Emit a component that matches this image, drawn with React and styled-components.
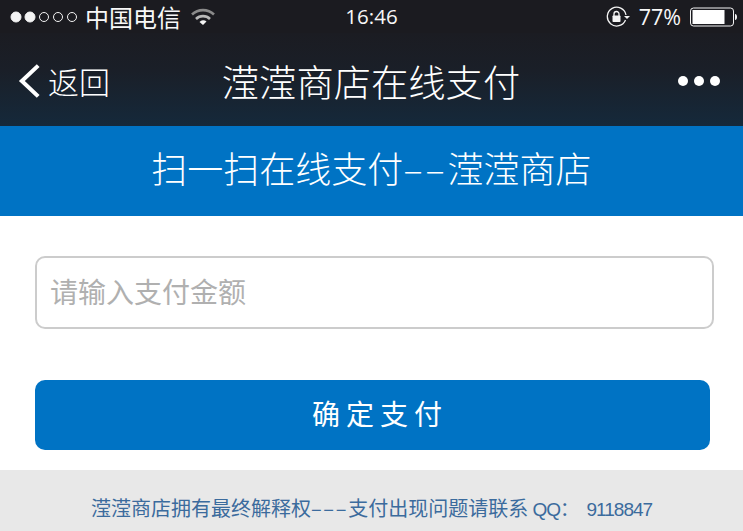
import React from "react";
import styled, { createGlobalStyle } from "styled-components";

const Global = createGlobalStyle`
  html, body { margin: 0; padding: 0; background: #fff; }
  body { font-family: "Noto Sans CJK SC", "Noto Sans", sans-serif; font-weight: 300; }
  * { box-sizing: border-box; }
`;
const Page = styled.div`
  width: 743px; height: 531px; overflow: hidden; display: flex; flex-direction: column;
`;
const StatusBar = styled.div`
  height: 33px; background: #1b1b20; color: #f8f8f8; display: grid;
  grid-template-columns: 1fr auto 1fr; align-items: center; padding: 0 6px 0 10px;
`;
const StatusLeft = styled.div`display: flex; align-items: center;`;
const StatusRight = styled.div`display: flex; align-items: center; justify-content: flex-end;`;
const Carrier = styled.span`font-size: 24px; line-height: 33px; margin-left: 6px; font-weight: 400;`;
const Clock = styled.span`font-family: "Open Sans", sans-serif; font-weight: 400; font-size: 20.5px; line-height: 33px; margin-left: -4px; `;
const Percent = styled.span`font-family: "Open Sans", sans-serif; font-weight: 400; font-size: 21.5px; line-height: 33px; margin: 0 9px 0 9px;`;
const Wifi = styled.svg`margin-left: 9px;`;
const NavBar = styled.div`
  height: 93px; padding: 2px 23px 0 18px; display: grid; grid-template-columns: 1fr auto 1fr; align-items: center;
  background: linear-gradient(#1b1c22 0%, #1a1f28 40%, #15293b 100%); color: #fff;
`;
const Back = styled.div`display: flex; align-items: center; gap: 5px; font-size: 31px;`;
const NavTitle = styled.div`font-size: 37.3px; line-height: 50px; white-space: nowrap; margin-left: 4px;`;
const More = styled.div`display: flex; justify-content: flex-end; gap: 6px;`;
const Dot = styled.i`width: 10px; height: 10px; border-radius: 50%; background: #fff; display: block;`;
const Banner = styled.div`
  height: 90px; background: #0073c4; color: #fff; font-size: 36px; display: flex; align-items: center; justify-content: center; white-space: nowrap; padding-bottom: 9px;
`;
const BannerDash = styled.span`letter-spacing: 3px;`;
const Form = styled.div`flex: 1; padding: 40px 33px 20px 35px; display: flex; flex-direction: column; align-items: flex-start;`;
const Field = styled.div`
  width: 679px; height: 73px; border: 2px solid #ccc; border-radius: 10px; padding: 0 13px 4px; display: flex; align-items: center;
  color: #b0b0b0; font-size: 28px; font-weight: 400;
`;
const Pay = styled.div`
  margin-top: 51px; width: 675px; height: 70px; border-radius: 10px; background: #0073c4; color: #fff;
  display: flex; align-items: center; justify-content: center; font-size: 28px; letter-spacing: 6px; font-weight: 400; padding: 0 0 5px 15px;
`;
const Footer = styled.div`
  height: 61px; background: #e8e8e8; color: #3b6b9d; font-size: 20px; font-weight: 400; display: flex; align-items: center; justify-content: center; padding-top: 13px; white-space: pre; 
`;
const FooterDash = styled.span`letter-spacing: 1.7px;`;
const Contact = styled.span`font-family: "Liberation Sans", "Noto Sans CJK SC", sans-serif; font-size: 19px; letter-spacing: -1px;`;

export default function App() {
  return (
    <Page>
      <Global />
      <StatusBar>
        <StatusLeft>
          <svg width="69" height="12" viewBox="0 0 69 12" fill="#f4f4f4" stroke="#f4f4f4">
            <circle cx="6" cy="6" r="5" /><circle cx="20" cy="6" r="5" />
            <g fill="none" strokeWidth="1"><circle cx="34" cy="6" r="4.5" /><circle cx="48" cy="6" r="4.5" /><circle cx="62" cy="6" r="4.5" /></g>
          </svg>
          <Carrier>中国电信</Carrier>
          <Wifi width="26" height="18" viewBox="0 0 26 18" fill="none" stroke="#8a8a8a" strokeWidth="2.6">
            <path d="M2 6.5a16 16 0 0 1 22 0" />
            <path d="M6 11a10 10 0 0 1 14 0" stroke="#b8b8b8" />
            <path d="M9.5 14a5 5 0 0 1 7 -0.5L13 17z" fill="#f4f4f4" stroke="none" />
          </Wifi>
        </StatusLeft>
        <Clock>16:46</Clock>
        <StatusRight>
          <svg width="24" height="22" viewBox="0 0 24 22" fill="none" stroke="#f4f4f4" strokeWidth="1.3">
            <path d="M20 9A9.4 9.4 0 1 0 19.5 14" />
            <path d="M18 10h6l-3 3z" fill="#f4f4f4" stroke="none" />
            <rect x="6.5" y="9.5" width="8" height="6.5" rx="0.8" fill="#f4f4f4" stroke="none" />
            <path d="M8 10V8a2.5 2.5 0 0 1 5 0v2" />
          </svg>
          <Percent>77%</Percent>
          <svg width="47" height="20" viewBox="0 0 47 20">
            <rect x="0.5" y="1" width="43" height="18" rx="3" fill="none" stroke="#f4f4f4" strokeWidth="1" />
            <rect x="2.5" y="3" width="32" height="14" fill="#fff" />
            <path d="M45 7c1.5 0 2 1.5 2 3s-.5 3-2 3z" fill="#f4f4f4" />
          </svg>
        </StatusRight>
      </StatusBar>
      <NavBar>
        <Back>
          <svg width="25" height="36" viewBox="0 0 26 36" fill="none" stroke="#fff" strokeWidth="4.2">
            <path d="M21 2 4 18l17 16" />
          </svg>
          返回
        </Back>
        <NavTitle>滢滢商店在线支付</NavTitle>
        <More><Dot /><Dot /><Dot /></More>
      </NavBar>
      <Banner><span>扫一扫在线支付<BannerDash>––</BannerDash>滢滢商店</span></Banner>
      <Form>
        <Field>请输入支付金额</Field>
        <Pay>确定支付</Pay>
      </Form>
      <Footer><span>滢滢商店拥有最终解释权<FooterDash>–––</FooterDash>支付出现问题请联系<Contact> QQ：  9118847</Contact></span></Footer>
    </Page>
  );
}
